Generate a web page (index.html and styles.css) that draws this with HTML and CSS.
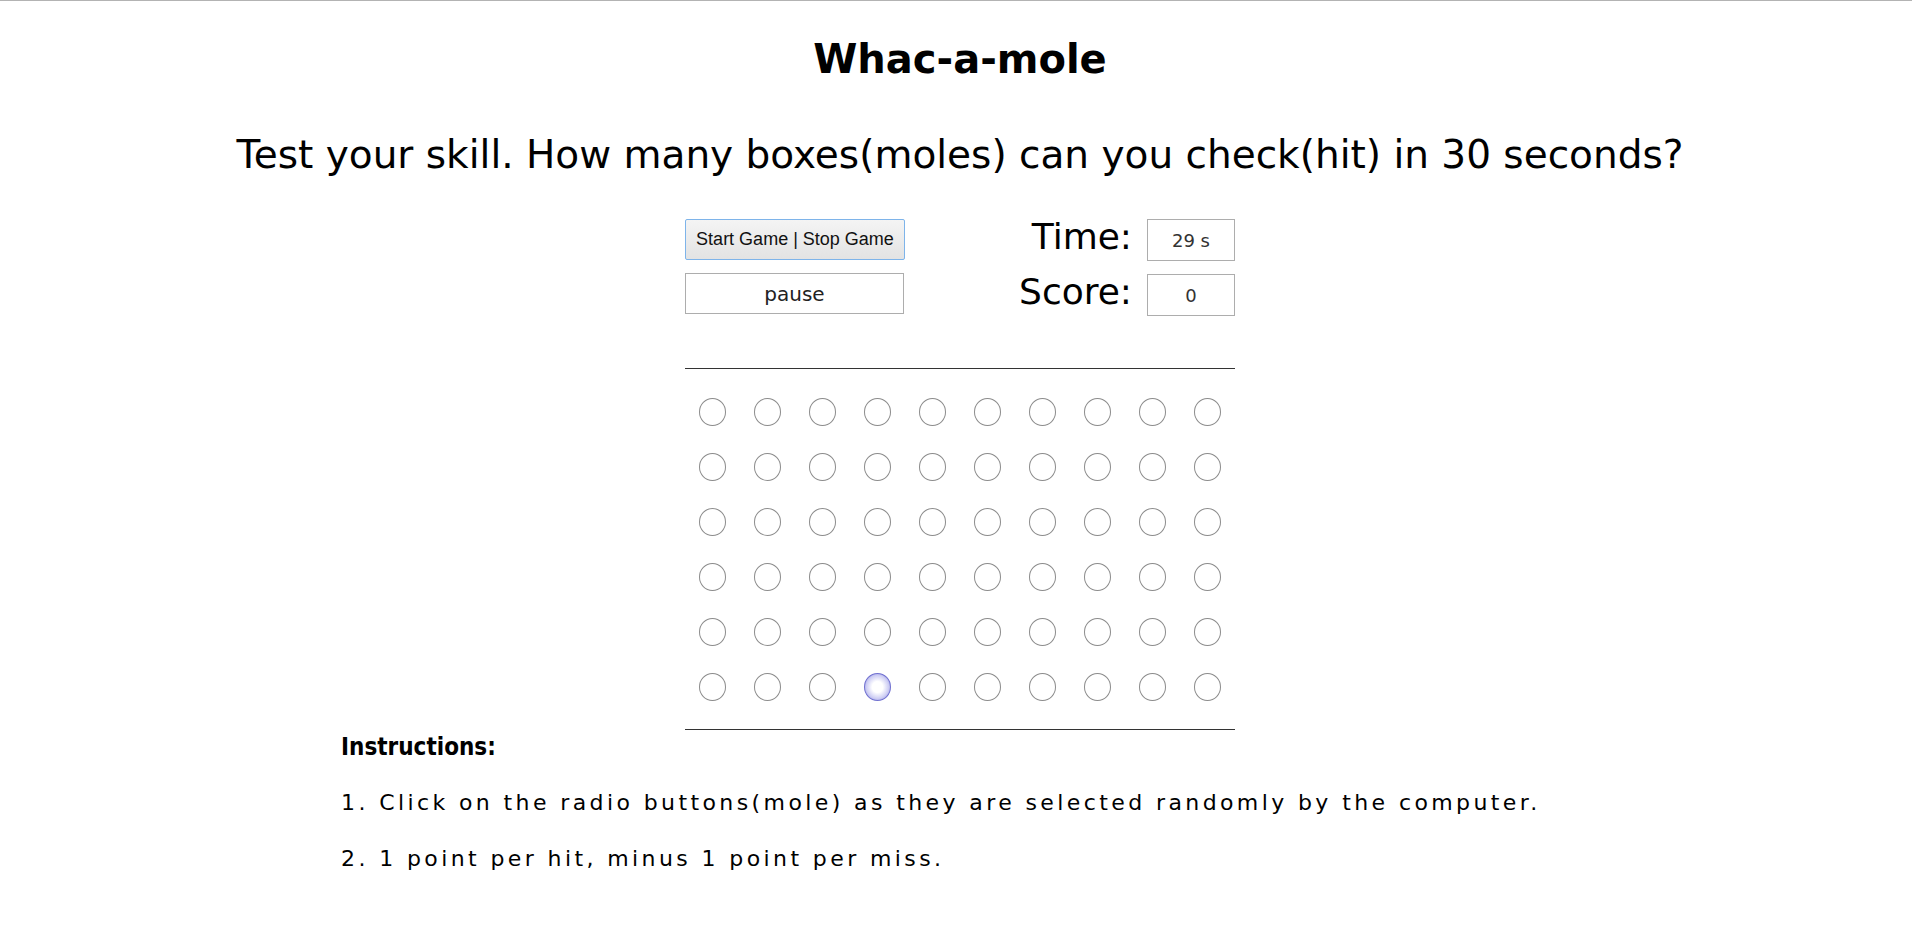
FILE: index.html
```html
<!DOCTYPE html>
<html lang="en">
<head>
<meta charset="utf-8">
<title>Whac-a-mole</title>
<link rel="stylesheet" href="styles.css">
</head>
<body>
<div class="page">
  <h1 class="title">Whac-a-mole</h1>
  <p class="subtitle">Test your skill. How many boxes(moles) can you check(hit) in 30 seconds?</p>

  <div class="board">
    <div class="controls">
      <div class="buttons">
        <button class="btn-start" type="button">Start Game | Stop Game</button>
        <button class="btn-pause" type="button">pause</button>
      </div>
      <div class="stats">
        <div class="stat"><span class="stat-label">Time:</span><span class="stat-box">29 s</span></div>
        <div class="stat"><span class="stat-label">Score:</span><span class="stat-box">0</span></div>
      </div>
    </div>

    <div class="field" id="field"></div>
  </div>

  <div class="instructions">
    <h3 class="instr-title">Instructions:</h3>
    <p class="instr-line">1. Click on the radio buttons(mole) as they are selected randomly by the computer.</p>
    <p class="instr-line">2. 1 point per hit, minus 1 point per miss.</p>
  </div>
</div>
<script src="app.js"></script>
</body>
</html>
```

FILE: styles.css
```css
html {
  border-top: 1px solid #b3b3b3;
}
body {
  margin: 0;
  padding: 0 0 0 8px;
  background: #fff;
  color: #000;
  font-family: "DejaVu Sans", sans-serif;
}
.page {
  display: flex;
  flex-direction: column;
  align-items: center;
}
.title {
  margin: 36px 0 0;
  font-size: 40px;
  font-weight: bold;
  line-height: 44px;
}
.subtitle {
  margin: 50px 0 0;
  font-size: 39px;
  line-height: 48px;
  font-weight: normal;
}
.board {
  width: 550px;
  margin-top: 40px;
}
.controls {
  display: flex;
  justify-content: space-between;
}
.buttons {
  display: flex;
  flex-direction: column;
  gap: 13px;
}
.btn-start {
  width: 220px;
  height: 41px;
  padding: 0;
  font-family: "Liberation Sans", Arial, sans-serif;
  font-size: 18px;
  color: #111;
  background: linear-gradient(#f4f4f4, #e3e3e3);
  border: 1px solid #7eb4ea;
  border-radius: 2px;
}
.btn-pause {
  width: 219px;
  height: 41px;
  padding: 0;
  font-family: "DejaVu Sans", sans-serif;
  font-size: 20px;
  color: #222;
  background: #fff;
  border: 1px solid #adadad;
}
.stats {
  display: flex;
  flex-direction: column;
  gap: 13px;
}
.stat {
  display: flex;
  align-items: flex-start;
  justify-content: flex-end;
  gap: 15px;
}
.stat-label {
  font-size: 36px;
  line-height: 35px;
}
.stat-box {
  width: 86px;
  height: 40px;
  border: 1px solid #adadad;
  display: flex;
  align-items: center;
  justify-content: center;
  font-size: 18px;
  color: #333;
}
.field {
  margin-top: 52px;
  border-top: 1px solid #333;
  border-bottom: 1px solid #333;
  padding: 15px 0 15px;
  display: grid;
  grid-template-columns: repeat(10, 55px);
  grid-auto-rows: 55px;
}
.mole {
  display: flex;
  align-items: center;
  justify-content: center;
}
.mole-dot {
  width: 25px;
  height: 26px;
  border: 1px solid #8c8c8c;
  border-radius: 50%;
  background: #fff;
}
.mole-dot.is-on {
  border-color: #7070d0;
  background: radial-gradient(ellipse at center, #ffffff 0%, #ffffff 30%, #cfcff4 62%, #8c8cde 92%);
}
.instructions {
  align-self: stretch;
  padding-left: 333px;
}
.instr-title {
  margin: 2px 0 0;
  font-family: "DejaVu Sans Condensed", "DejaVu Sans", sans-serif;
  font-stretch: condensed;
  font-size: 24px;
  font-weight: bold;
  line-height: 30px;
}
.instr-line {
  margin: 26px 0 0;
  font-size: 22px;
  letter-spacing: 3.4px;
  line-height: 30px;
}
```

FILE: app.js
```js
var field = document.getElementById('field');
for (var r = 0; r < 6; r++) {
  for (var c = 0; c < 10; c++) {
    var cell = document.createElement('div');
    cell.className = 'mole';
    var dot = document.createElement('span');
    dot.className = 'mole-dot' + (r === 5 && c === 3 ? ' is-on' : '');
    cell.appendChild(dot);
    field.appendChild(cell);
  }
}
```
